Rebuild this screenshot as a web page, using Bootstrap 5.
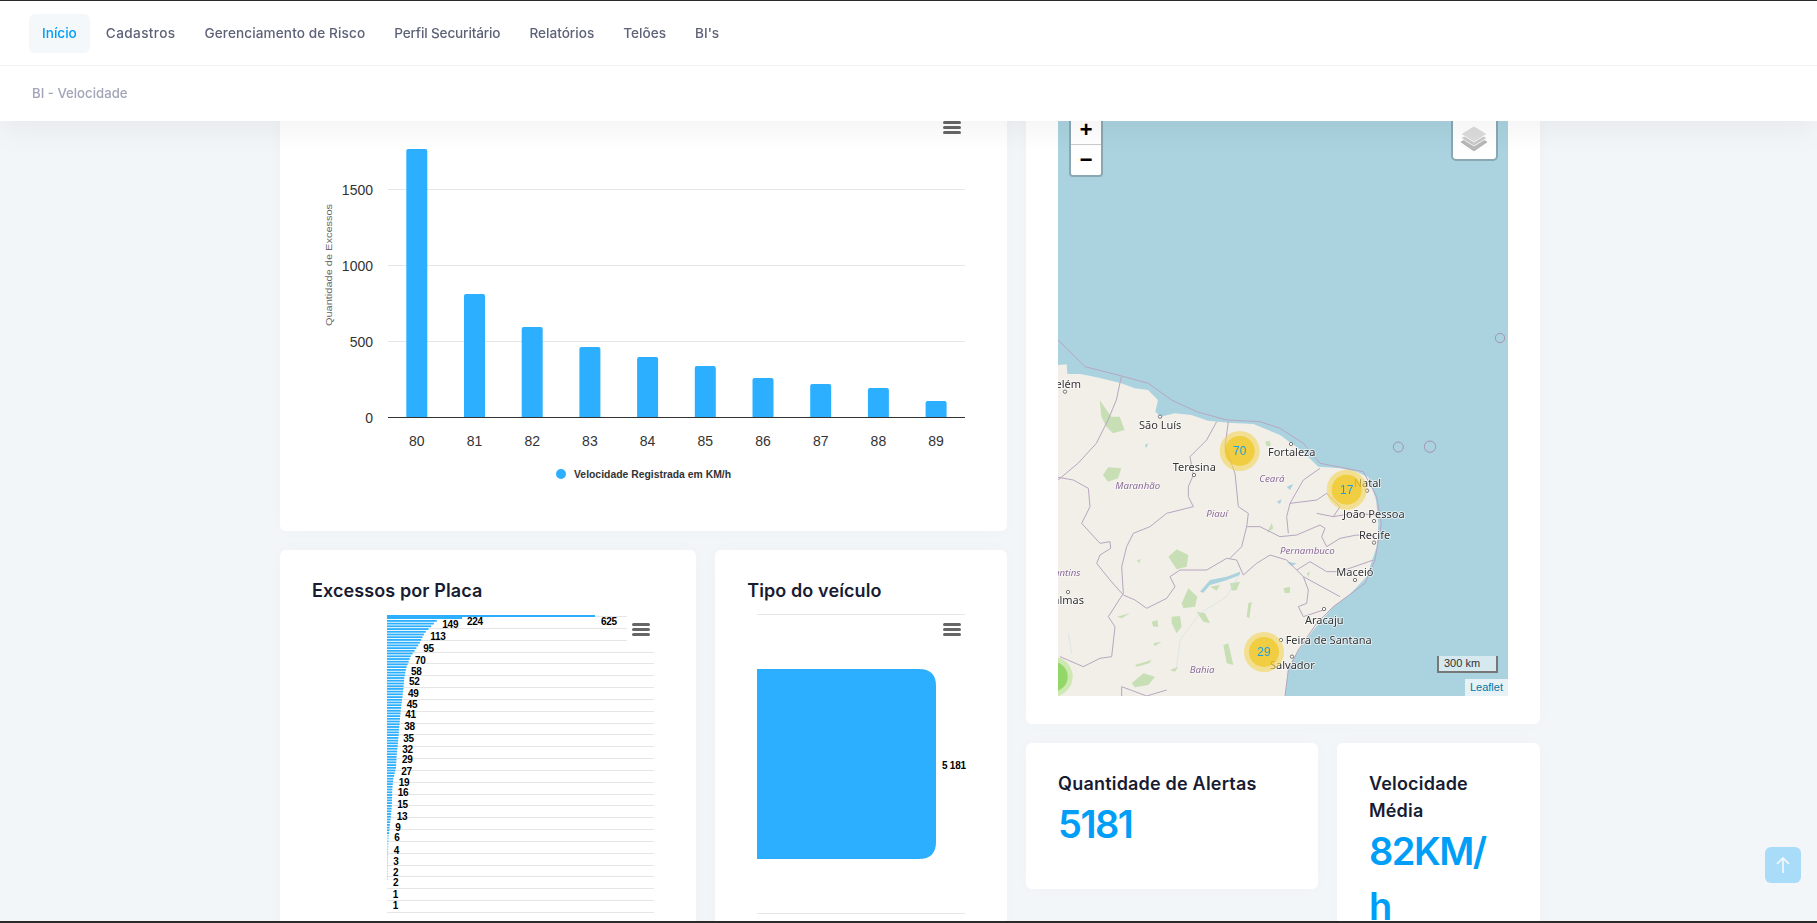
<!DOCTYPE html>
<html lang="pt-BR">
<head>
  <meta charset="UTF-8" />
  <meta name="viewport" content="width=device-width, initial-scale=1.0" />
  <title>BI - Velocidade</title>
  <link href="https://cdn.jsdelivr.net/npm/bootstrap@5.3.3/dist/css/bootstrap.min.css" rel="stylesheet">
  <style>
    html, body { height: 100%; }
    body {
      font-family: Inter, "Noto Sans", sans-serif;
      background: #f3f6f9;
      border-top: 1px solid #2b2b2b;
      border-bottom: 2px solid #2b2b2b;
      overflow: hidden;
    }
    svg text { font-family: "Liberation Sans", Arial, sans-serif; }

    /* header */
    .top-head { top: 1px; background: #fff; box-shadow: 0 10px 30px rgba(0,0,0,.05); z-index: 100; }
    .menu-bar { height: 65px; padding-left: 29px; border-bottom: 1px solid #eff2f5; }
    .menu-bar a { padding: 0 13px; height: 39px; line-height: 39px; margin-right: 3px; border-radius: 6px; color: #5e6278; font-size: 13.6px; font-weight: 500; text-decoration: none; }
    .menu-bar a.active { color: #009ef7; background: #f5f8fa; }
    .menu-bar a.link-wide { letter-spacing: .38px; }
    .menu-bar a.link-mid { letter-spacing: .1px; }
    .menu-bar a.link-tight { letter-spacing: -.15px; }
    .crumb-bar { height: 55px; padding-left: 32px; color: #a1a5b7; font-size: 13.2px; font-weight: 500; }

    /* page */
    .bi-wrap { width: 1260px; margin-left: 280px; padding-top: 100px; }
    .bi-row { --bs-gutter-x: 19px; --bs-gutter-y: 19px; }
    .bi-nest { margin-top: 0; }
    .bi-card { border: 0; border-radius: 6px; background: #fff; box-shadow: 0 0 20px rgba(76,87,125,.02); }
    .bi-card svg { display: block; }
    .box-title { margin: 0; font-size: 18px; line-height: 27px; font-weight: 600; color: #181c32; letter-spacing: .1px; }
    .plot-card { padding: 27px 32px 0; height: 420px; }
    .map-card { padding: 0 32px 28px; }
    .stat-card { padding: 27px 32px 37px; }
    .stat-title { margin: 0; font-size: 18px; line-height: 27px; font-weight: 600; color: #181c32; letter-spacing: .2px; }
    .stat-num { font-size: 38px; line-height: 55px; font-weight: 600; color: #009ef7; letter-spacing: -1.5px; }

    /* map */
    .map-box { height: 595px; overflow: hidden; background: #aad3df; }
    .map-draw { filter: blur(.3px); }
    .map-box text.city { font-family: "Noto Sans", sans-serif; font-size: 33px; fill: #333; paint-order: stroke; stroke: rgba(255,255,255,.75); stroke-width: 5px; }
    .map-box text.uf { font-family: "Noto Sans", sans-serif; font-size: 29px; font-style: italic; fill: #8a6a96; paint-order: stroke; stroke: rgba(255,255,255,.6); stroke-width: 4px; }
    .map-box text.qty { font-size: 36px; fill: #1c9ee6; text-anchor: middle; }
    .zoom-box { top: 12px; left: 11px; width: 34px; border: 2px solid rgba(0,0,0,.2); border-radius: 4px; background-clip: padding-box; }
    .zoom-box span { display: block; height: 30px; background: #fff; text-align: center; font: bold 22px/33px "Liberation Mono", monospace; color: #000; }
    .zoom-box span:first-child { border-bottom: 1px solid #ccc; border-radius: 2px 2px 0 0; }
    .zoom-box span:last-child { border-radius: 0 0 2px 2px; }
    .layer-box { top: 15px; right: 10px; width: 47px; height: 45px; border: 2px solid rgba(0,0,0,.2); border-radius: 5px; background: #fff; background-clip: padding-box; }
    .scale-box { right: 10px; bottom: 23px; width: 61px; height: 17px; padding-left: 5px; border: 2px solid #777; border-top: 0; background: rgba(255,255,255,.5); font: 11px/15px "Liberation Sans", sans-serif; color: #333; }
    .attr-box { right: 0; bottom: 0; padding: 0 5px; height: 17px; background: rgba(255,255,255,.7); font: 11px/17px "Liberation Sans", sans-serif; color: #0078a8; }

    .to-top { right: 16px; bottom: 40px; width: 36px; height: 36px; border-radius: 6px; background: #009ef7; opacity: .3; z-index: 90; }
  </style>
</head>
<body>

  <!-- Header -->
  <header class="top-head position-fixed start-0 end-0">
    <nav class="menu-bar d-flex align-items-center">
      <a class="active" href="#">Início</a>
      <a class="link-wide" href="#">Cadastros</a>
      <a class="link-mid" href="#">Gerenciamento de Risco</a>
      <a class="link-tight" href="#">Perfil Securitário</a>
      <a href="#">Relatórios</a>
      <a href="#">Telões</a>
      <a href="#">BI's</a>
    </nav>
    <div class="crumb-bar d-flex align-items-center">BI - Velocidade</div>
  </header>

  <div class="bi-wrap">
    <div class="row bi-row">

      <!-- left column -->
      <div class="col-7">
        <div class="card bi-card">
          <svg id="speedChart" width="727" height="430" viewBox="280 101 727 430"></svg>
        </div>
        <div class="row bi-row bi-nest">
          <div class="col-7">
            <div class="card bi-card plot-card">
              <h3 class="box-title">Excessos por Placa</h3>
              <svg id="plateChart" width="352" height="330" viewBox="312 604 352 330"></svg>
            </div>
          </div>
          <div class="col-5">
            <div class="card bi-card plot-card">
              <h3 class="box-title">Tipo do veículo</h3>
              <svg id="typeChart" width="228" height="330" viewBox="747 604 228 330">
                <g stroke="#e6e6e6"><path d="M757 614.5H965M757 913.5H965" /></g>
                <path d="M757 669H919Q936 669 936 686V842Q936 859 919 859H757Z" fill="#2caffe" />
                <text x="942" y="769" font-size="10" letter-spacing="-.25" font-weight="bold" fill="#000">5 181</text>
                <g fill="#666"><rect x="943" y="623" width="18" height="3" rx="1.5" /><rect x="943" y="628" width="18" height="3" rx="1.5" /><rect x="943" y="633" width="18" height="3" rx="1.5" /></g>
              </svg>
            </div>
          </div>
        </div>
      </div>

      <!-- right column -->
      <div class="col-5">
        <div class="card bi-card map-card">
          <div class="map-box position-relative">
            <svg class="map-draw" width="451" height="595" viewBox="54 -897 1353 1785">
              <!-- land -->
              <path fill="#f2efe9" d="M54 -105L80 -107L82 -78L120 -78L170 -68L244 -50L284 -35L324 -30L354 0L346 35L362 50L404 40L454 45L504 62L564 68L640 72L720 105L785 152L835 200L900 205L950 215L985 232L1008 300L1015 370L1010 440L980 530L930 582L880 620L820 690L770 760L745 800L735 888L54 888Z" />
              <!-- parks -->
              <g fill="#c8dfb6">
                <path d="M179 0L214 50L239 50L254 90L219 100L199 80L184 50Z" />
                <path d="M189 225L204 202L244 205L234 235L204 245Z" />
                <path d="M385 470L410 448L445 465L440 500L410 508Z" />
                <path d="M290 480L302 478L298 490Z" />
                <path d="M425 610L445 565L472 590L465 620L430 625Z" />
                <path d="M395 650L420 648L425 680L410 700L395 670Z" />
                <path d="M510 560L540 555L530 572Z" />
                <path d="M570 550L600 545L590 570L575 572Z" />
                <path d="M730 565L750 560L750 578L735 580Z" />
                <path d="M275 850L310 820L345 830L325 855L285 862Z" />
                <path d="M285 795L335 780L328 790L290 800Z" />
                <path d="M550 735L565 730L580 795L560 790Z" />
                <path d="M335 665L352 660L355 680L340 680Z" />
                <path d="M675 125L690 122L692 138L680 138Z" />
                <path d="M470 635L495 640L510 670L490 665Z" />
                <path d="M800 520L810 515L805 532Z" />
                <path d="M230 650L270 640L245 655Z" />
                <path d="M625 610L635 605L628 655L620 650Z" />
                <path d="M340 730L365 725L345 738Z" />
                <path d="M390 810L415 800L405 815Z" />
                <path d="M680 400L695 370L700 385Z" />
              </g>
              <!-- water -->
              <g fill="#aad3df">
                <path d="M480 575L510 540L560 530L600 515L600 525L555 542L510 555L490 578Z" />
                <path d="M740 260L760 252L750 270Z" />
                <path d="M740 485L770 490L755 498Z" />
                <path d="M710 305L725 298L720 312Z" />
                <path d="M315 135L325 130L318 145Z" />
              </g>
              <g fill="none" stroke="#cfe2e6" stroke-width="2">
                <path d="M600 520L560 590L480 640L420 720L410 800" />
                <path d="M85 700L95 760" />
              </g>
              <!-- borders -->
              <g fill="none" stroke="#b7a6bf" stroke-width="3" stroke-linejoin="round">
                <path d="M54 -180L135 -100L245 -72L325 -50L395 0L470 35L560 60L660 65L720 85L790 130L840 190L970 215L1010 290L1024 370L1005 480L975 550L880 620L830 670L775 750L745 810L735 888" />
                <path d="M244 -70L229 0L204 60L169 130L114 190L54 240" />
                <path d="M530 65L500 120L450 170L460 225L445 260L445 290L460 320L380 340L330 380L280 400L260 440L245 500L250 580" />
                <path d="M54 232L100 240L145 265L150 320L125 370L180 430L210 425L212 445L180 465L170 490L210 540L250 585L285 600L320 625L380 595L405 560L390 530L420 510L500 510L560 475L590 480L610 525L650 490L690 465L740 480L770 510L790 530L900 590" />
                <path d="M565 65L555 140L585 220L595 320L625 340L620 380L605 440L570 475" />
                <path d="M620 380L660 380L720 410L770 405L840 375L855 385L845 410L860 440L900 415L950 405L1005 410" />
                <path d="M840 205L790 240L750 310L740 350L745 400" />
                <path d="M750 310L830 300L860 280L900 320L880 350L830 340M880 350L940 340L1012 345" />
                <path d="M770 510L810 485L860 515L900 515L1000 480" />
                <path d="M790 530L805 570L800 610L775 620L790 650L850 630" />
                <path d="M250 580L205 650L225 680L215 770L180 775L130 800L60 770" />
                <path d="M245 888L245 860L320 888L380 870" />
              </g>
              <g fill="none" stroke="#a493ad" stroke-width="3">
                <circle cx="1075" cy="141" r="15" /><circle cx="1170" cy="140" r="17" /><circle cx="1380" cy="-186" r="14" />
              </g>
              <!-- cities -->
              <g fill="#fff" stroke="#777" stroke-width="3">
                <circle cx="75" cy="-25" r="5" /><circle cx="360" cy="50" r="5" /><circle cx="753" cy="132" r="5" /><circle cx="462" cy="225" r="5" /><circle cx="981" cy="272" r="5" /><circle cx="1002" cy="363" r="5" /><circle cx="1002" cy="428" r="5" /><circle cx="945" cy="540" r="5" /><circle cx="852" cy="627" r="5" /><circle cx="723" cy="720" r="5" /><circle cx="756" cy="770" r="5" /><circle cx="84" cy="576" r="5" />
              </g>
              <text class="city" x="25" y="-36">Belém</text>
              <text class="city" x="297" y="87">São Luís</text>
              <text class="city" x="684" y="167">Fortaleza</text>
              <text class="city" x="398" y="213">Teresina</text>
              <text class="city" x="941" y="262">Natal</text>
              <text class="city" x="909" y="353">João Pessoa</text>
              <text class="city" x="957" y="417">Recife</text>
              <text class="city" x="889" y="527">Maceió</text>
              <text class="city" x="795" y="671">Aracaju</text>
              <text class="city" x="737" y="733">Feira de Santana</text>
              <text class="city" x="690" y="808">Salvador</text>
              <text class="city" x="20" y="611">Palmas</text>
              <text class="uf" x="226" y="266">Maranhão</text>
              <text class="uf" x="658" y="245">Ceará</text>
              <text class="uf" x="499" y="350">Piauí</text>
              <text class="uf" x="720" y="462">Pernambuco</text>
              <text class="uf" x="449" y="818">Bahia</text>
              <text class="uf" x="0" y="527">Tocantins</text>
              <!-- clusters -->
              <circle cx="599" cy="153" r="60" fill="#f1d357" fill-opacity=".6" /><circle cx="599" cy="153" r="45" fill="#f0c20c" fill-opacity=".6" /><text class="qty" x="599" y="165">70</text>
              <circle cx="920" cy="269" r="60" fill="#f1d357" fill-opacity=".6" /><circle cx="920" cy="269" r="45" fill="#f0c20c" fill-opacity=".6" /><text class="qty" x="920" y="281">17</text>
              <circle cx="672" cy="756" r="60" fill="#f1d357" fill-opacity=".6" /><circle cx="672" cy="756" r="45" fill="#f0c20c" fill-opacity=".6" /><text class="qty" x="672" y="768">29</text>
              <circle cx="38" cy="830" r="60" fill="#b5e28c" fill-opacity=".6" /><circle cx="38" cy="830" r="45" fill="#6ecc39" fill-opacity=".6" />
            </svg>
            <div class="zoom-box position-absolute"><span>+</span><span>−</span></div>
            <div class="layer-box position-absolute d-flex justify-content-center align-items-center">
              <svg width="26" height="26" viewBox="0 0 26 26">
                <path d="M0 16L13 9L26 16L13 25Z" fill="#b9b9b9" stroke="#999" stroke-width=".5" />
                <path d="M0 12L13 5L26 12L13 20Z" fill="#c9c9c9" stroke="#fff" stroke-width=".8" />
                <path d="M0 8L13 0L26 8L13 16Z" fill="#dcdcdc" stroke="#fff" stroke-width=".8" />
              </svg>
            </div>
            <div class="scale-box position-absolute">300 km</div>
            <div class="attr-box position-absolute">Leaflet</div>
          </div>
        </div>
        <div class="row bi-row bi-nest">
          <div class="col-7">
            <div class="card bi-card stat-card">
              <h4 class="stat-title">Quantidade de Alertas</h4>
              <div class="stat-num">5181</div>
            </div>
          </div>
          <div class="col-5">
            <div class="card bi-card stat-card">
              <h4 class="stat-title">Velocidade Média</h4>
              <div class="stat-num">82KM/<br>h</div>
            </div>
          </div>
        </div>
      </div>

    </div>
  </div>

  <div class="to-top position-fixed d-flex justify-content-center align-items-center">
    <svg width="16" height="18" viewBox="0 0 16 18" fill="none" stroke="#fff" stroke-width="1.6"><path d="M8 17V2M2 8L8 2L14 8" /></svg>
  </div>

<script src="https://cdn.jsdelivr.net/npm/bootstrap@5.3.3/dist/js/bootstrap.bundle.min.js"></script>
<script>
  const blue = "#2caffe";

  function menuIcon(x, y) {
    let s = "";
    for (let i = 0; i < 3; i++) {
      s += `<rect x="${x}" y="${y + i * 5}" width="18" height="3" rx="1.5" fill="#666" />`;
    }
    return s;
  }

  // speed histogram
  function drawSpeed() {
    const tops = [149, 294, 327, 347, 357, 366, 378, 384, 388, 401];
    let s = "";
    [189.5, 265.5, 341.5].forEach(y => { s += `<path d="M388 ${y}H965" stroke="#e6e6e6" />`; });
    [[1500, 189], [1000, 265], [500, 341], [0, 417]].forEach(t => {
      s += `<text x="373" y="${t[1] + 6}" font-size="14" text-anchor="end" fill="#333">${t[0]}</text>`;
    });
    tops.forEach((t, i) => {
      const cx = 416.8 + i * 57.7, x = cx - 10.5, r = 2;
      s += `<path d="M${x} 417V${t + r}Q${x} ${t} ${x + r} ${t}H${x + 21 - r}Q${x + 21} ${t} ${x + 21} ${t + r}V417Z" fill="${blue}" />`;
      s += `<text x="${cx}" y="446" font-size="14" text-anchor="middle" fill="#333">${80 + i}</text>`;
    });
    s += `<path d="M388 417.5H965" stroke="#333" />`;
    s += `<text transform="translate(332 265) rotate(-90) scale(1.1 .95)" font-size="10" text-anchor="middle" fill="#666">Quantidade de Excessos</text>`;
    s += `<circle cx="561" cy="474" r="5" fill="${blue}" />`;
    s += `<text x="574" y="478" font-size="10.4" font-weight="bold" fill="#333">Velocidade Registrada em KM/h</text>`;
    s += menuIcon(943, 121);
    document.getElementById("speedChart").innerHTML = s;
  }

  // horizontal bars per plate, values and label y come from the chart labels
  function drawPlates() {
    const gridY = [198,235,271,307,340,376,412,448,484,520,553,589,625,661,697,733,766,802,838,874,910,946,979,1015,1051,1087];
    const labels = [[625,214],[224,215],[149,224],[113,260],[95,296],[70,332],[58,365],[52,395],[49,431],[45,464],[41,494],[38,530],[35,566],[32,599],[29,629],[27,665],[19,698],[16,728],[15,764],[13,800],[9,833],[6,863],[4,900],[3,935],[2,968],[2,998],[1,1034],[1,1067]];
    let s = "";
    gridY.forEach((g, i) => {
      const y = Math.round(550 + g / 3) + 0.5;
      s += `<path d="M387 ${y}H${i < 3 ? 627 : 654}" stroke="#e6e6e6" />`;
    });
    // first two bars are apart, the rest follow the label curve
    const rows = labels.slice(2);
    s += `<rect x="387" y="615" width="208" height="2" fill="${blue}" />`;
    s += `<rect x="387" y="617" width="75" height="2" fill="${blue}" />`;
    for (let y = 620; y < 880; y += 2.72) {
      const z = (y - 550) * 3;
      let v = 1;
      for (let i = 0; i < rows.length - 1; i++) {
        if (z >= rows[i][1] - 14 && z < rows[i + 1][1] - 14) {
          const k = (z - rows[i][1] + 14) / (rows[i + 1][1] - rows[i][1]);
          v = rows[i][0] + (rows[i + 1][0] - rows[i][0]) * k;
        }
      }
      const w = Math.max(0.4, v / 3);
      s += `<rect x="387" y="${y.toFixed(1)}" width="${w.toFixed(1)}" height="1.8" fill="${blue}" opacity="${v < 6 ? 0.5 : 1}" />`;
    }
    labels.forEach(l => {
      const off = l[0] > 100 ? 17 : l[0] > 30 ? 14 : 16;
      const x = l[0] == 625 ? 601 : l[0] == 224 ? 467 : 387 + (l[0] + off) / 3;
      s += `<text x="${x.toFixed(1)}" y="${(550 + l[1] / 3 + 3.5).toFixed(1)}" font-size="10" letter-spacing="-.25" font-weight="bold" fill="#000">${l[0]}</text>`;
    });
    s += menuIcon(632, 623);
    document.getElementById("plateChart").innerHTML = s;
  }

  drawSpeed();
  drawPlates();
</script>
</body>
</html>
